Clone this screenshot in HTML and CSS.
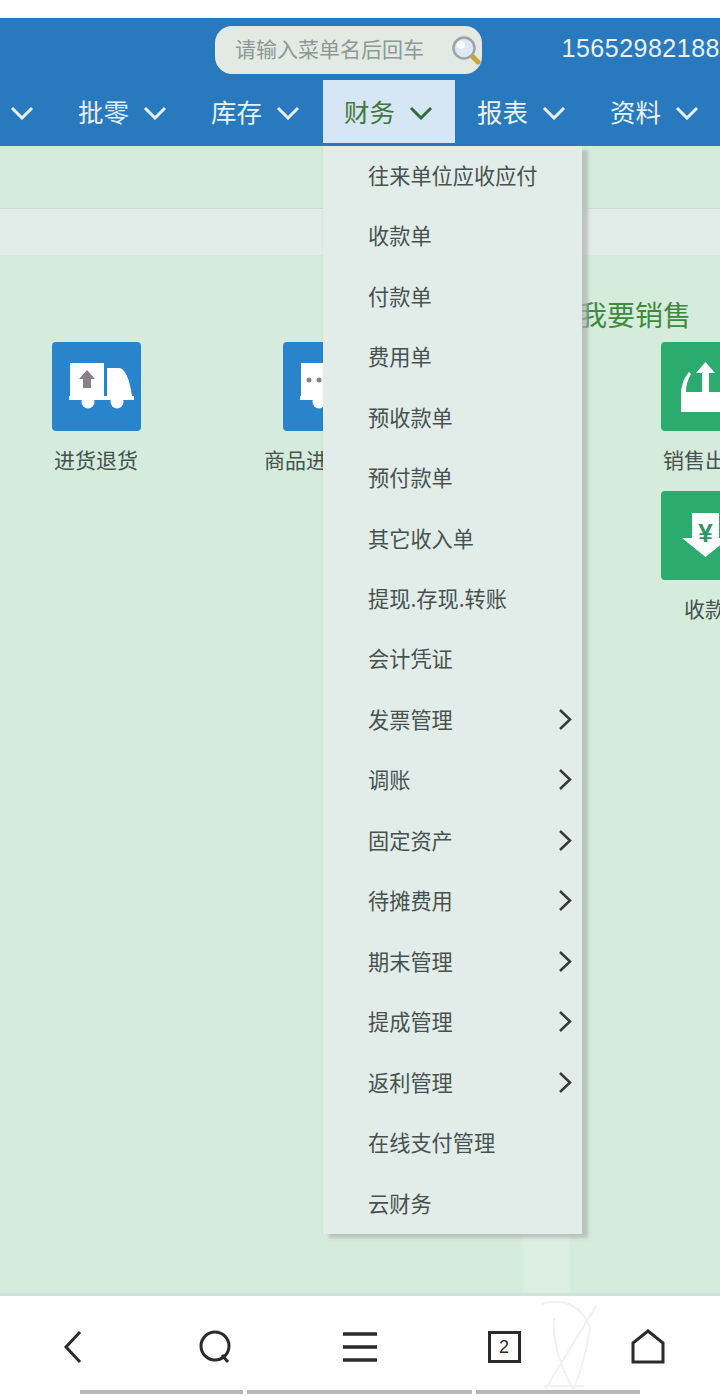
FILE: index.html

```html
<!DOCTYPE html>
<html lang="zh-CN">
<head>
  <meta charset="UTF-8" />
  <meta name="viewport" content="width=device-width, initial-scale=1.0" />
  <title>财务</title>
  <link rel="stylesheet" href="styles.css">
</head>
<body>
  <div class="page">
    <header class="header">
      <div class="topbar">
        <div class="search">
          <span class="search-text">请输入菜单名后回车</span>
          <svg class="search-icon" width="30" height="30" viewBox="0 0 30 30">
            <line x1="21" y1="21" x2="27" y2="27" stroke="#c9a63c" stroke-width="5" stroke-linecap="round"/>
            <circle cx="13" cy="13" r="10.500" fill="#dfe6f4" stroke="#9aa7a8" stroke-width="2.500"/>
            <circle cx="10" cy="10" r="4" fill="#fff"/>
          </svg>
        </div>
        <span class="phone">15652982188</span>
      </div>
      <nav class="nav">
        <div class="nav-item"><span class="nav-text">进货</span><svg class="chev" width="24" height="14" viewBox="0 0 24 14"><path d="M2 2l10 10 10-10"/></svg></div>
        <div class="nav-item"><span class="nav-text">批零</span><svg class="chev" width="24" height="14" viewBox="0 0 24 14"><path d="M2 2l10 10 10-10"/></svg></div>
        <div class="nav-item"><span class="nav-text">库存</span><svg class="chev" width="24" height="14" viewBox="0 0 24 14"><path d="M2 2l10 10 10-10"/></svg></div>
        <div class="nav-item open"><span class="nav-text">财务</span><svg class="chev" width="24" height="14" viewBox="0 0 24 14"><path d="M2 2l10 10 10-10"/></svg>
          <ul class="menu">
            <li>往来单位应收应付</li>
            <li>收款单</li>
            <li>付款单</li>
            <li>费用单</li>
            <li>预收款单</li>
            <li>预付款单</li>
            <li>其它收入单</li>
            <li>提现.存现.转账</li>
            <li>会计凭证</li>
            <li>发票管理<svg class="more" width="15" height="23" viewBox="0 0 15 23"><path d="M2 2l10 9.500-10 9.500"/></svg></li>
            <li>调账<svg class="more" width="15" height="23" viewBox="0 0 15 23"><path d="M2 2l10 9.500-10 9.500"/></svg></li>
            <li>固定资产<svg class="more" width="15" height="23" viewBox="0 0 15 23"><path d="M2 2l10 9.500-10 9.500"/></svg></li>
            <li>待摊费用<svg class="more" width="15" height="23" viewBox="0 0 15 23"><path d="M2 2l10 9.500-10 9.500"/></svg></li>
            <li>期末管理<svg class="more" width="15" height="23" viewBox="0 0 15 23"><path d="M2 2l10 9.500-10 9.500"/></svg></li>
            <li>提成管理<svg class="more" width="15" height="23" viewBox="0 0 15 23"><path d="M2 2l10 9.500-10 9.500"/></svg></li>
            <li>返利管理<svg class="more" width="15" height="23" viewBox="0 0 15 23"><path d="M2 2l10 9.500-10 9.500"/></svg></li>
            <li>在线支付管理</li>
            <li>云财务</li>
          </ul>
        </div>
        <div class="nav-item"><span class="nav-text">报表</span><svg class="chev" width="24" height="14" viewBox="0 0 24 14"><path d="M2 2l10 10 10-10"/></svg></div>
        <div class="nav-item"><span class="nav-text">资料</span><svg class="chev" width="24" height="14" viewBox="0 0 24 14"><path d="M2 2l10 10 10-10"/></svg></div>
      </nav>
    </header>

    <main class="main">
      <div class="strip"></div>
      <div class="band"></div>
      <div class="groups">
        <section class="group-buy">
          <div class="tile">
            <svg class="tile-icon blue" viewBox="0 0 89 89">
              <path fill="#fff" d="M18 21h34v33H18zM55 26h12c6 0 11 12 13 28H55z"/>
              <path fill="#fff" d="M17 54h65v4H17z"/>
              <circle cx="36" cy="60" r="6.500" fill="#fff"/>
              <circle cx="65" cy="60" r="6.500" fill="#fff"/>
              <path fill="#8b8088" d="M35 28l8 9h-4v9h-8v-9h-4z"/>
            </svg>
            <span class="tile-label">进货退货</span>
          </div>
          <div class="tile">
            <svg class="tile-icon blue" viewBox="0 0 89 89">
              <path fill="#fff" d="M18 21h34v33H18zM55 26h12c6 0 11 12 13 28H55z"/>
              <path fill="#fff" d="M17 54h65v4H17z"/>
              <circle cx="36" cy="60" r="6.500" fill="#fff"/>
              <circle cx="65" cy="60" r="6.500" fill="#fff"/>
              <circle cx="26" cy="38" r="2.500" fill="#8b8088"/>
              <circle cx="36" cy="38" r="2.500" fill="#8b8088"/>
              <circle cx="46" cy="38" r="2.500" fill="#8b8088"/>
            </svg>
            <span class="tile-label">商品进货统计</span>
          </div>
        </section>
        <section class="group-sale">
          <h2 class="group-title">我要销售</h2>
          <div class="tile">
            <svg class="tile-icon green" viewBox="0 0 89 89">
              <path fill="#fff" d="M20 70V50C21 42 23 36 28 30L30 32C27 37 25 43 25 50H64C64 43 62 37 59 32L61 30C66 36 68 42 69 50V70z"/>
              <path fill="#fff" d="M44.500 20L54 31h-6v20h-7V31h-6z"/>
            </svg>
            <span class="tile-label">销售出货</span>
          </div>
          <div class="tile">
            <svg class="tile-icon green" viewBox="0 0 89 89">
              <path fill="#fff" d="M31 22h27v25h10L44.500 66 21 47h10z"/>
              <text class="yen" x="44.500" y="51" text-anchor="middle">¥</text>
            </svg>
            <span class="tile-label">收款</span>
          </div>
        </section>
      </div>
      <div class="ghost"></div>
    </main>

    <footer class="toolbar">
      <div class="tool">
        <svg width="24" height="36" viewBox="0 0 24 36"><path class="line" d="M20 3L6 18l14 15"/></svg>
      </div>
      <div class="tool">
        <svg width="36" height="36" viewBox="0 0 36 36"><circle class="line" cx="17" cy="17" r="14"/><path class="line" d="M24 26l6 7"/></svg>
      </div>
      <div class="tool">
        <svg width="36" height="32" viewBox="0 0 36 32"><path class="line thick" d="M1 3h34M1 16h34M1 29h34"/></svg>
      </div>
      <div class="tool">
        <span class="tabs">2</span>
      </div>
      <div class="tool">
        <svg width="36" height="36" viewBox="0 0 36 36"><path class="line" d="M3 33V14L18 2l15 12v19z"/></svg>
      </div>
      <svg class="watermark" width="90" height="100" viewBox="0 0 90 100">
        <path d="M12 8c20-6 40 0 48 24-4 26-10 46-16 60M24 22c-2 20 6 50 20 72M66 10L16 92M14 90h40"/>
      </svg>
      <div class="progress">
        <span class="seg seg-a"></span>
        <span class="seg seg-b"></span>
        <span class="seg seg-c"></span>
      </div>
    </footer>
  </div>
</body>
</html>
```

FILE: styles.css

```css
* { box-sizing: border-box; }
html, body { margin: 0; padding: 0; }
body { font-family: "Noto Sans CJK SC", "Noto Sans", sans-serif; background: #fff; overflow: hidden; }
.page { display: flex; flex-direction: column; height: 1396px; width: 720px; padding-top: 18px; overflow: hidden; }

.header { background: #2979bf; color: #e8f1f8; position: relative; z-index: 5; flex-shrink: 0; }
.topbar { display: flex; align-items: center; height: 62px; padding-left: 215px; padding-top: 2px; }
.search { display: flex; align-items: center; justify-content: space-between; width: 267px; height: 48px; padding: 0 1px 0 20px; background: #e3e9e3; border-radius: 17px; }
.search-text { margin-bottom: 4px; font-size: 21px; color: #8b9997; white-space: nowrap; }
.search-icon { display: block; }
.phone { margin-left: 80px; margin-bottom: 4px; font-family: "Liberation Sans", sans-serif; font-size: 25px; letter-spacing: 0.5px; white-space: nowrap; }

.nav { display: flex; height: 66px; margin-left: -76px; width: 800px; }
.nav-item { display: flex; align-items: center; flex-shrink: 0; width: 133px; height: 63px; padding-left: 21px; gap: 14px; font-size: 25.500px; }
.nav-text { margin-bottom: 3px; }
.chev { display: block; margin-top: 2px; }
.chev path { fill: none; stroke: #e8f1f8; stroke-width: 3; }
.nav-item.open { position: relative; width: 132px; margin-right: 1px; background: #d6e6f5; color: #3f7a3c; }
.nav-item.open .chev path { stroke: #2f6e3a; }

.menu { position: absolute; top: 66px; left: 0; width: 259px; margin: 0; padding: 0; list-style: none; background: #e2ece8; box-shadow: 6px 4px 3px rgba(175, 178, 177, 0.7), -1px 0 2px rgba(0, 0, 0, 0.05); color: #47524f; font-size: 21.200px; }
.menu li { display: flex; align-items: center; justify-content: space-between; height: 60.47px; padding: 0 9px 4px 45px; }
.more { display: block; margin-top: 2px; }
.more path { fill: none; stroke: #333b3a; stroke-width: 2.500; }

.main { flex: 1; position: relative; background: #d5ebdc; border-bottom: 3px solid #cbe5dc; overflow: hidden; }
.strip { height: 63px; border-bottom: 1px solid #c7ddd0; }
.band { height: 46px; background: #e2ece8; }
.groups { display: flex; padding: 39px 0 0 30px; }
.group-buy { display: flex; gap: 99px; flex-shrink: 0; width: 549px; padding-top: 48px; }
.group-sale { flex-shrink: 0; width: 300px; }
.group-title { margin: 0 0 8px; font-size: 28px; font-weight: normal; line-height: 40px; color: #3f8a3c; }
.group-sale .tile { margin-left: 60px; }
.tile { display: flex; flex-direction: column; align-items: center; width: 132px; margin-bottom: 17px; }
.tile-icon { display: block; width: 89px; height: 89px; border-radius: 4px; }
.tile-icon.blue { background: #2a84cb; }
.tile-icon.green { background: #2bab6e; }
.yen { font-family: "Liberation Sans", sans-serif; font-size: 26px; font-weight: bold; fill: #2a9a60; }
.tile-label { margin-top: 13px; font-size: 21px; line-height: 30px; color: #47524f; white-space: nowrap; }
.ghost { position: absolute; left: 523px; bottom: 0; width: 47px; height: 60px; background: rgba(235, 240, 238, 0.35); }

.toolbar { display: flex; flex-shrink: 0; position: relative; height: 100px; padding-top: 2px; background: #fff; }
.tool { display: flex; align-items: center; justify-content: center; width: 144px; }
.tool svg { display: block; }
.line { fill: none; stroke: #2b2b2b; stroke-width: 3; }
.thick { stroke-width: 3.500; }
.tabs { display: flex; align-items: center; justify-content: center; width: 33px; height: 32px; border: 3px solid #2b2b2b; font-family: "Liberation Sans", sans-serif; font-size: 18px; color: #2b2b2b; }
.watermark { position: absolute; left: 530px; top: 0; }
.watermark path { fill: none; stroke: #f0f1f1; stroke-width: 2; }
.progress { position: absolute; left: 80px; bottom: 2px; display: flex; gap: 4px; }
.seg { display: block; height: 4px; background: #b6b6b6; }
.seg-a { width: 163px; }
.seg-b { width: 225px; }
.seg-c { width: 164px; }
```
